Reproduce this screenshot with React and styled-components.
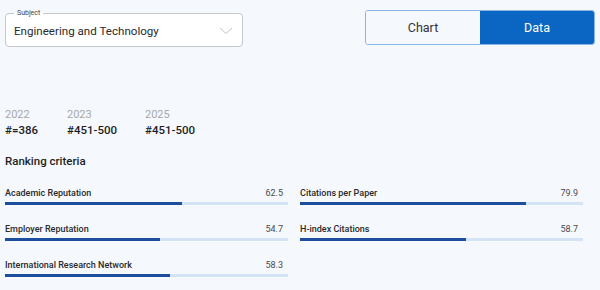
import React from "react";
import styled, { createGlobalStyle } from "styled-components";

const Global = createGlobalStyle`
  html, body { margin: 0; padding: 0; background: #f5f8fd; }
  body { font-family: Roboto, "Noto Sans", sans-serif; color: #222; }
`;

const Page = styled.div`
  width: 600px;
  height: 290px;
  padding: 10px 12px 0 5px;
  box-sizing: border-box;
  overflow: hidden;
`;

const TopBar = styled.div`
  display: flex;
  justify-content: space-between;
  align-items: flex-start;
`;

const SelectBox = styled.div`
  position: relative;
  margin-top: 3px;
  width: 238px;
  height: 34px;
  box-sizing: border-box;
  border: 1px solid #c4c7cc;
  border-radius: 4px;
  background: #fff;
  display: flex;
  align-items: center;
  justify-content: space-between;
  padding: 1px 9px 0 8px;
`;

const Legend = styled.span`
  position: absolute;
  top: -5px;
  left: 8px;
  padding: 0 3px;
  background: linear-gradient(#f5f8fd 50%, #fff 50%);
  font-size: 7px;
  line-height: 9px;
  color: #444;
`;

const SelectText = styled.span`
  font-size: 11.6px;
  color: #2a2a2a;
`;

const Toggle = styled.div`
  display: flex;
  width: 230px;
  height: 35px;
  box-sizing: border-box;
  border: 1px solid #8ab4e4;
  border-radius: 3px;
  overflow: hidden;
  margin-right: -7px;
`;

const ToggleBtn = styled.div`
  flex: 1;
  display: flex;
  align-items: center;
  justify-content: center;
  font-size: 12.5px;
  background: ${(p) => (p.$active ? "#0a66c2" : "#f5f8fd")};
  color: ${(p) => (p.$active ? "#fff" : "#333")};
`;

const Years = styled.div`
  display: flex;
  margin-top: 61px;
`;

const YearCol = styled.div`
  display: flex;
  flex-direction: column;
  width: ${(p) => p.$w}px;
`;

const YearLabel = styled.span`
  font-size: 11px;
  line-height: 14px;
  color: #a8a8a8;
`;

const YearValue = styled.span`
  font-size: 11.5px;
  line-height: 16px;
  font-weight: 500;
  color: #1e1e1e;
`;

const Heading = styled.div`
  margin-top: 16px;
  font-size: 11.5px;
  line-height: 14px;
  font-weight: 500;
  color: #1e1e1e;
`;

const Grid = styled.div`
  display: grid;
  grid-template-columns: 283px 283px;
  column-gap: 12px;
  margin-top: 18px;
  row-gap: 17px;
`;

const Item = styled.div`
  display: flex;
  flex-direction: column;
`;

const ItemHead = styled.div`
  display: flex;
  justify-content: space-between;
  padding-right: 5px;
  font-size: 9px;
  line-height: 12px;
  padding-top: 1px;
`;

const ItemLabel = styled.span`
  font-weight: 500;
  color: #2a2a2a;
`;

const ItemValue = styled.span`
  color: #4a4a4a;
`;

const Track = styled.div`
  margin-top: 3px;
  height: 3px;
  background: #d5e3f6;
`;

const Fill = styled.div`
  height: 100%;
  background: #1d4e9e;
`;

const criteria = [
  ["Academic Reputation", 62.5],
  ["Citations per Paper", 79.9],
  ["Employer Reputation", 54.7],
  ["H-index Citations", 58.7],
  ["International Research Network", 58.3],
];

export default function App() {
  return (
    <Page>
      <Global />
      <TopBar>
        <SelectBox>
          <Legend>Subject</Legend>
          <SelectText>Engineering and Technology</SelectText>
          <svg width="14" height="8" viewBox="0 0 14 8">
            <path d="M1 1 L7 6.5 L13 1" fill="none" stroke="#c0c4ca" strokeWidth="1" />
          </svg>
        </SelectBox>
        <Toggle>
          <ToggleBtn>Chart</ToggleBtn>
          <ToggleBtn $active>Data</ToggleBtn>
        </Toggle>
      </TopBar>
      <Years>
        <YearCol $w={62}>
          <YearLabel>2022</YearLabel>
          <YearValue>#=386</YearValue>
        </YearCol>
        <YearCol $w={78}>
          <YearLabel>2023</YearLabel>
          <YearValue>#451-500</YearValue>
        </YearCol>
        <YearCol $w={80}>
          <YearLabel>2025</YearLabel>
          <YearValue>#451-500</YearValue>
        </YearCol>
      </Years>
      <Heading>Ranking criteria</Heading>
      <Grid>
        {criteria.map(([label, v]) => (
          <Item key={label}>
            <ItemHead>
              <ItemLabel>{label}</ItemLabel>
              <ItemValue>{v}</ItemValue>
            </ItemHead>
            <Track>
              <Fill style={{ width: `${v}%` }} />
            </Track>
          </Item>
        ))}
      </Grid>
    </Page>
  );
}
